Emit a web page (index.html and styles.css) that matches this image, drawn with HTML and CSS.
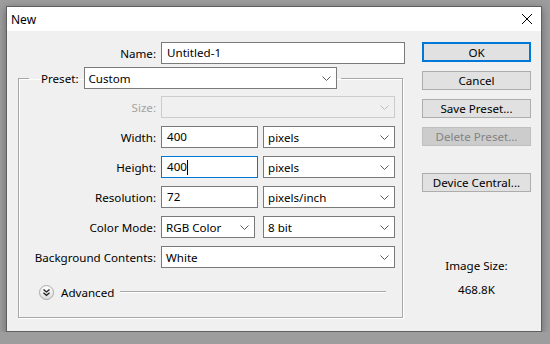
FILE: index.html
```html
<!DOCTYPE html>
<html lang="en">
<head>
    <meta charset="UTF-8">
    <title>New</title>
    <link rel="stylesheet" href="styles.css">
</head>
<body>
    <div class="dialog">
        <div class="titlebar">
            <span class="title">New</span>
            <svg class="close" width="10" height="10" viewBox="0 0 10 10">
                <path d="M0 0L10 10M10 0L0 10" stroke="#000" stroke-width="1" fill="none"/>
            </svg>
        </div>

        <div class="content">
            <div class="left">
                <div class="row name-row">
                    <span class="label">Name:</span>
                    <div class="field name-field">Untitled-1</div>
                </div>

                <fieldset class="group">
                    <legend class="preset">
                        <span>Preset:</span>
                        <div class="combo preset-combo">
                            <span>Custom</span>
                            <svg class="chev" width="9" height="5"><polyline points="0.5,0.5 4.5,4.5 8.5,0.5"/></svg>
                        </div>
                    </legend>

                    <div class="rows">
                        <div class="row">
                            <span class="label disabled">Size:</span>
                            <div class="combo wide off">
                                <span></span>
                                <svg class="chev" width="9" height="5"><polyline points="0.5,0.5 4.5,4.5 8.5,0.5"/></svg>
                            </div>
                        </div>
                        <div class="row">
                            <span class="label">Width:</span>
                            <div class="field num">400</div>
                            <div class="combo unit">
                                <span>pixels</span>
                                <svg class="chev" width="9" height="5"><polyline points="0.5,0.5 4.5,4.5 8.5,0.5"/></svg>
                            </div>
                        </div>
                        <div class="row">
                            <span class="label">Height:</span>
                            <div class="field num focus">400<span class="caret"></span></div>
                            <div class="combo unit">
                                <span>pixels</span>
                                <svg class="chev" width="9" height="5"><polyline points="0.5,0.5 4.5,4.5 8.5,0.5"/></svg>
                            </div>
                        </div>
                        <div class="row">
                            <span class="label">Resolution:</span>
                            <div class="field num">72</div>
                            <div class="combo unit">
                                <span>pixels/inch</span>
                                <svg class="chev" width="9" height="5"><polyline points="0.5,0.5 4.5,4.5 8.5,0.5"/></svg>
                            </div>
                        </div>
                        <div class="row">
                            <span class="label">Color Mode:</span>
                            <div class="combo mode">
                                <span>RGB Color</span>
                                <svg class="chev" width="9" height="5"><polyline points="0.5,0.5 4.5,4.5 8.5,0.5"/></svg>
                            </div>
                            <div class="combo unit bits">
                                <span>8 bit</span>
                                <svg class="chev" width="9" height="5"><polyline points="0.5,0.5 4.5,4.5 8.5,0.5"/></svg>
                            </div>
                        </div>
                        <div class="row">
                            <span class="label">Background Contents:</span>
                            <div class="combo wide">
                                <span>White</span>
                                <svg class="chev" width="9" height="5"><polyline points="0.5,0.5 4.5,4.5 8.5,0.5"/></svg>
                            </div>
                        </div>
                    </div>

                    <div class="advanced">
                        <svg class="adv-icon" width="15" height="15" viewBox="0 0 15 15">
                            <defs>
                                <linearGradient id="g" x1="0" y1="0" x2="0" y2="1">
                                    <stop offset="0" stop-color="#ffffff"/>
                                    <stop offset="1" stop-color="#dcdcdc"/>
                                </linearGradient>
                            </defs>
                            <circle cx="7.5" cy="7.5" r="7" fill="url(#g)" stroke="#a8a8a8"/>
                            <polyline points="4.5,4.5 7.5,7 10.5,4.5" fill="none" stroke="#222" stroke-width="1.3"/>
                            <polyline points="4.5,7.8 7.5,10.3 10.5,7.8" fill="none" stroke="#222" stroke-width="1.3"/>
                        </svg>
                        <span>Advanced</span>
                        <div class="rule"></div>
                    </div>
                </fieldset>
            </div>

            <div class="right">
                <div class="btn default">OK</div>
                <div class="btn">Cancel</div>
                <div class="btn">Save Preset...</div>
                <div class="btn disabled-btn">Delete Preset...</div>
                <div class="btn device">Device Central...</div>
                <div class="size-label">Image Size:</div>
                <div class="size-value">468.8K</div>
            </div>
        </div>
    </div>
</body>
</html>
```

FILE: styles.css
```css
/* Basic Styles */
body {
    margin: 0;
    background-color: #9d9d9d;
    font-family: "Noto Sans", Arial, sans-serif;
    font-size: 11.6px;
    color: #000;
}
.dialog {
    margin: 6px 0 0 6px;
    width: 536px;
    height: 326px;
    box-sizing: border-box;
    border: 1px solid #5f5f5f;
    background-color: #f0f0f0;
    box-shadow: 0 2px 8px rgba(0, 0, 0, 0.35);
    display: flex;
    flex-direction: column;
}
.titlebar {
    height: 24px;
    background-color: #fff;
    display: flex;
    align-items: center;
    justify-content: space-between;
    padding: 0 9px 0 4px;
}
.title {
    font-size: 12px;
}
.content {
    display: flex;
    padding-top: 11px;
}
.left {
    width: 388px;
    padding-left: 11px;
}
.row {
    display: flex;
    align-items: center;
    gap: 5px;
    height: 22px;
}
.label {
    width: 138px;
    text-align: right;
    white-space: nowrap;
}
.label.disabled {
    color: #a3a3a3;
}
.field {
    box-sizing: border-box;
    height: 22px;
    line-height: 20px;
    border: 1px solid #7a7a7a;
    background-color: #fff;
    padding-left: 5px;
    display: flex;
    align-items: center;
}
.name-field {
    width: 244px;
}
.field.num {
    width: 97px;
}
.field.focus {
    border-color: #0078d7;
}
.caret {
    display: inline-block;
    width: 1px;
    height: 15px;
    background-color: #000;
}
.combo {
    box-sizing: border-box;
    height: 22px;
    border: 1px solid #7a7a7a;
    background-color: #fff;
    display: flex;
    align-items: center;
    justify-content: space-between;
    padding: 1px 5px 0 4px;
    white-space: nowrap;
}
.chev polyline {
    fill: none;
    stroke: #5a5a5a;
    stroke-width: 1;
}
.combo.off {
    background-color: #f0f0f0;
    border-color: #cccccc;
}
.combo.off .chev polyline {
    stroke: #bdbdbd;
}
.combo.wide {
    width: 234px;
}
.combo.unit {
    width: 132px;
}
.combo.mode {
    width: 94px;
}
.combo.bits {
    margin-left: 3px;
}

/* Preset group */
.group {
    margin: 3px 0 0 0;
    padding: 0 0 17px 0;
    width: 385px;
    box-sizing: border-box;
    border: 1px solid #a8a8a8;
    box-shadow: inset 1px 1px 0 #fff, 1px 1px 0 #fff;
    min-inline-size: 0;
}
.preset {
    display: flex;
    align-items: center;
    gap: 5px;
    margin-left: 10px;
    padding: 0 4px 0 12px;
}
.preset-combo {
    width: 253px;
}
.rows {
    display: flex;
    flex-direction: column;
    gap: 8px;
    padding-top: 7px;
}
.rows .label {
    width: 137px;
}
.advanced {
    display: flex;
    align-items: center;
    height: 16px;
    margin-top: 16px;
    padding-left: 20px;
    padding-right: 16px;
}
.adv-icon {
    margin-right: 7px;
}
.rule {
    flex: 1;
    height: 1px;
    margin-left: 6px;
    background-color: #a8a8a8;
    border-bottom: 1px solid #fff;
}

/* Buttons column */
.right {
    margin-left: 16px;
    width: 109px;
    display: flex;
    flex-direction: column;
}
.btn {
    box-sizing: border-box;
    height: 19px;
    margin-top: 9px;
    border: 1px solid #adadad;
    background-color: #e1e1e1;
    display: flex;
    align-items: center;
    justify-content: center;
    white-space: nowrap;
}
.btn.default {
    margin-top: 0;
    height: 20px;
    border: 2px solid #0078d7;
}
.btn.disabled-btn {
    background-color: #cccccc;
    border-color: #bfbfbf;
    color: #838383;
}
.btn.device {
    margin-top: 27px;
}
.size-label {
    margin-top: 66px;
    line-height: 16px;
    text-align: center;
}
.size-value {
    margin-top: 8px;
    line-height: 16px;
    text-align: center;
}
```
